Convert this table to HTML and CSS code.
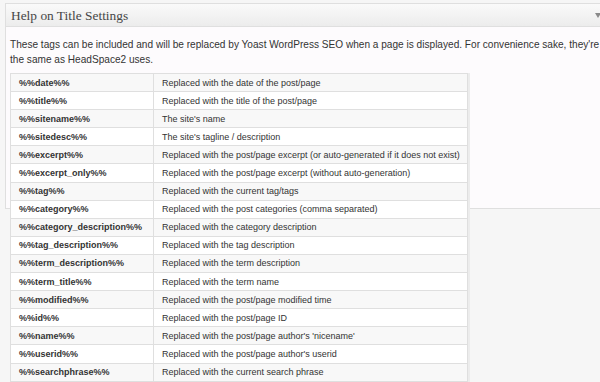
FILE: index.html
```html
<!DOCTYPE html>
<html lang="en">
<head>
    <meta charset="UTF-8">
    <title>Help on Title Settings</title>
    <link rel="stylesheet" href="styles.css">
</head>
<body>
    <div class="postbox">
        <div class="handle"></div>
        <h3 class="hndle">Help on Title Settings</h3>
        <div class="inside">
            <p class="intro">These tags can be included and will be replaced by Yoast WordPress SEO when a page is displayed. For convenience sake, they're the same as HeadSpace2 uses.</p>
            <table class="tags">
                <tr><th>%%date%%</th><td>Replaced with the date of the post/page</td></tr>
                <tr><th>%%title%%</th><td>Replaced with the title of the post/page</td></tr>
                <tr><th>%%sitename%%</th><td>The site's name</td></tr>
                <tr><th>%%sitedesc%%</th><td>The site's tagline / description</td></tr>
                <tr><th>%%excerpt%%</th><td>Replaced with the post/page excerpt (or auto-generated if it does not exist)</td></tr>
                <tr><th>%%excerpt_only%%</th><td>Replaced with the post/page excerpt (without auto-generation)</td></tr>
                <tr><th>%%tag%%</th><td>Replaced with the current tag/tags</td></tr>
                <tr><th>%%category%%</th><td>Replaced with the post categories (comma separated)</td></tr>
                <tr><th>%%category_description%%</th><td>Replaced with the category description</td></tr>
                <tr><th>%%tag_description%%</th><td>Replaced with the tag description</td></tr>
                <tr><th>%%term_description%%</th><td>Replaced with the term description</td></tr>
                <tr><th>%%term_title%%</th><td>Replaced with the term name</td></tr>
                <tr><th>%%modified%%</th><td>Replaced with the post/page modified time</td></tr>
                <tr><th>%%id%%</th><td>Replaced with the post/page ID</td></tr>
                <tr><th>%%name%%</th><td>Replaced with the post/page author's 'nicename'</td></tr>
                <tr><th>%%userid%%</th><td>Replaced with the post/page author's userid</td></tr>
                <tr><th>%%searchphrase%%</th><td>Replaced with the current search phrase</td></tr>
                <tr class="more"><th></th><td></td></tr>
            </table>
        </div>
    </div>
</body>
</html>
```
FILE: styles.css
```css
* { box-sizing: border-box; margin: 0; padding: 0; }
body {
    font-family: "Liberation Sans", Arial, sans-serif;
    background-color: #f6f6f6;
    color: #333333;
    overflow: hidden;
    height: 382px;
}
.postbox {
    margin: 3px 0 0 5px;
    width: 600px;
    border: 1px solid #dfdfdf;
    border-right: none;
    position: relative;
}
.hndle {
    height: 23px;
    padding: 4px 0 0 5px;
    font-family: "Liberation Serif", Georgia, serif;
    font-weight: normal;
    font-size: 13.4px;
    color: #464646;
    background: linear-gradient(to bottom, #fafafa, #ececec);
    border-bottom: 1px solid #dfdfdf;
}
.handle {
    position: absolute;
    top: 9px;
    right: 4px;
    width: 0;
    height: 0;
    border-left: 3px solid transparent;
    border-right: 3px solid transparent;
    border-top: 5px solid #8a8a8a;
}
.inside {
    background-color: #fdfbfd;
    height: 181px;
    padding: 10px 0 0 4px;
}
.intro {
    font-size: 10.1px;
    line-height: 15px;
    color: #333333;
    margin-bottom: 6px;
}
.tags {
    border-collapse: collapse;
    table-layout: fixed;
    width: 458px;
    font-size: 9px;
    box-shadow: 2px 0 0 #ececec;
}
.tags tr { height: 18.1px; background-color: #ffffff; }
.tags tr:nth-child(odd) { background-color: #f8f8f8; }
.tags th, .tags td {
    border: 1px solid #dfdfdf;
    padding: 0 8px;
    text-align: left;
    white-space: nowrap;
}
.tags th { width: 143px; font-weight: bold; }
```
